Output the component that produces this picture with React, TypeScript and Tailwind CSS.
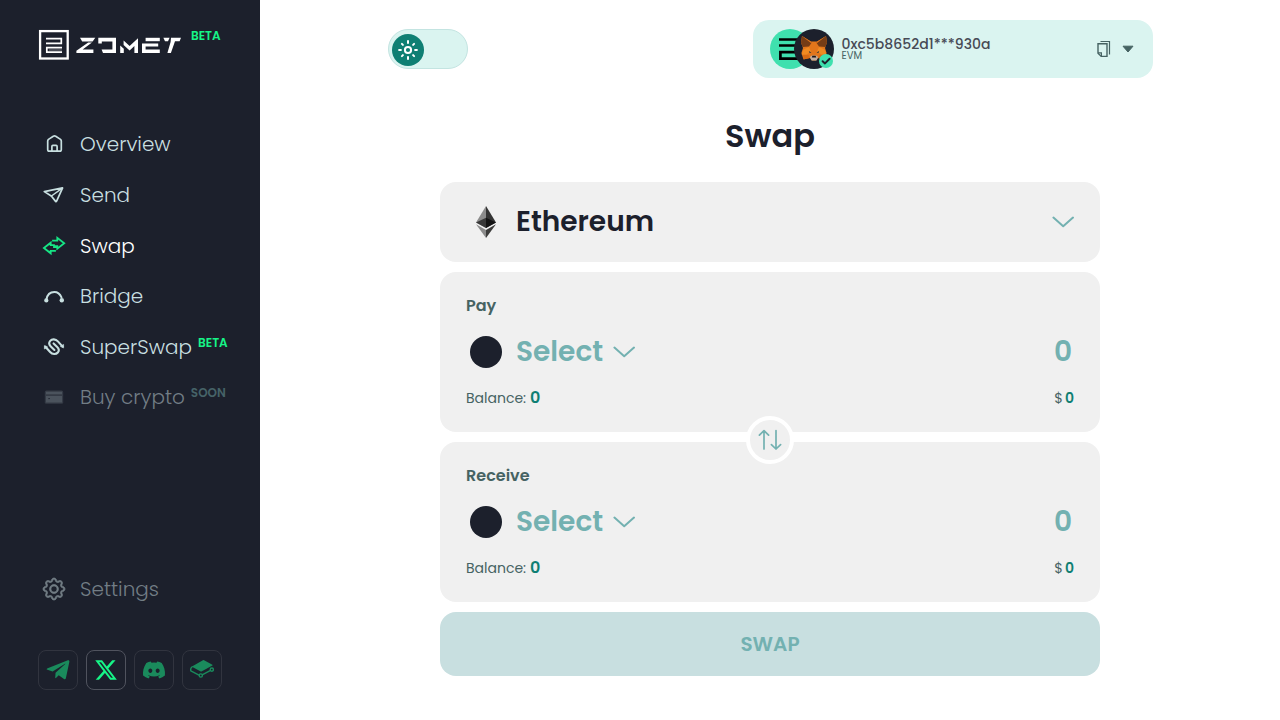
import type { ReactNode } from "react";
import { BsGear } from "react-icons/bs";
import { FaDiscord, FaTelegramPlane } from "react-icons/fa";
import { FaXTwitter } from "react-icons/fa6";

function Logo() {
  return (
    <svg width="144" height="32" viewBox="38 29 144 32" className="block" fill="none">
      <rect x="40.1" y="31.1" width="27.6" height="27.4" stroke="#fff" strokeWidth="2.3" />
      <path d="M46 38.7H61.3V43.3H46M62 47.6H46.8V52.2H62" stroke="#fff" strokeWidth="1.7" />
      <path d="M49 50H62" stroke="#fff" strokeWidth=".8" opacity=".5" />
      <g fill="#fff">
        <path d="M80 37.8H95.3L92.6 41.4H82.2Z" />
        <path d="M88.2 42.4H92L82.6 49.4H93.4V53H76.4V50.8Z" />
        <path d="M98.3 37.8H116V52.9H103L101.6 49.6H112.4V41.4H101.8V43.4H98.3Z" />
        <path d="M120.2 45.6L123.8 48.8V53H120.2Z" />
        <path d="M123.6 40.6L129.6 46L138 38.2V53H134.4V46L129.6 50.6L123.6 45Z" />
        <path d="M145.6 37.8H159.8V41.2H145.6Z" />
        <path d="M142 43.4H158.2V46.6H145.6V49.6H159.8V53H142Z" />
        <path d="M163.4 37.8H169.6L168 41.2H165Z" />
        <path d="M171 37.8H181L179.6 41.2H175L170.9 53H167.4L170.6 42Z" />
      </g>
    </svg>
  );
}

function Icon({ children, className = "" }: { children: ReactNode; className?: string }) {
  return (
    <svg width="24" height="24" viewBox="0 0 24 24" fill="none" stroke="currentColor" strokeWidth="1.5" strokeLinecap="round" strokeLinejoin="round" className={`shrink-0 ${className}`}>
      {children}
    </svg>
  );
}

const HomeIcon = () => (
  <Icon>
    <path d="M5.7 9.1Q5.7 8 6.5 7.4L11.3 4.2Q12.5 3.5 13.7 4.2L18.5 7.4Q19.3 8 19.3 9.1V17.5Q19.3 19.2 17.7 19.2H7.3Q5.7 19.2 5.7 17.5Z" strokeWidth="1.7" />
    <path d="M9.9 19V14.4Q9.9 13.3 10.9 13.3H14.1Q15.1 13.3 15.1 14.4V19" strokeWidth="1.7" />
  </Icon>
);
const SendIcon = () => (
  <Icon>
    <path d="M20.6 4.9L2.3 8.6L9.3 13L13.6 18.4Q14.2 19 14.6 18.2Z" strokeWidth="1.7" />
    <path d="M20.4 5.1L9.4 13" />
  </Icon>
);
const SwapIcon = () => (
  <Icon className="text-[#16e585]">
    <path d="M13 16.8H8.7V19.3L1.9 14L8.7 8.7V11.2H12V13.2H14.4" strokeWidth="1.8" strokeLinecap="square" strokeLinejoin="miter" />
    <path d="M11 6.6H15.3V3.9L22.2 9.2L15.3 14.6V12.1H13" strokeWidth="1.8" strokeLinecap="square" strokeLinejoin="miter" />
  </Icon>
);
const BridgeIcon = () => (
  <Icon>
    <path d="M4.4 15.6C5.4 9.6 9 8 12.4 8C16.2 8 18.2 10.5 19.5 13.4" strokeWidth="2" />
    <circle cx="4.3" cy="16.4" r="2.1" fill="currentColor" stroke="none" />
    <circle cx="19.8" cy="16.2" r="2.2" fill="currentColor" stroke="none" />
  </Icon>
);
const SuperSwapIcon = () => (
  <Icon>
    <path d="M20.6 11.6L15.9 6.4C13.6 3.8 10 3.8 8.2 5.9C6.6 7.8 7.3 10 8.8 11.5L12.4 15" strokeWidth="2.1" />
    <path d="M3.4 11.8L8.1 17C10.4 19.6 14 19.6 15.8 17.5C17.4 15.6 16.7 13.4 15.2 11.9L11.6 8.4" strokeWidth="2.1" />
    <path d="M2.4 10.8V14L5.4 12.2ZM21.6 12.6V9.4L18.6 11.2Z" fill="currentColor" strokeWidth="0.6" />
  </Icon>
);
const CardIcon = () => (
  <Icon>
    <rect x="2.8" y="5.6" width="18.4" height="13.2" rx="1.5" fill="#343a45" stroke="none" />
    <path d="M4 6.8H20V9.2H4ZM4 10.9H20V17.6H4Z" fill="#4b535d" stroke="none" />
    <path d="M6.8 13.6H7.4" stroke="#1c202c" strokeWidth="1" />
  </Icon>
);
const GitbookIcon = () => (
  <Icon>
    <path d="M14.1 2.2L22.4 6.7Q23 7.1 22.4 7.5L11.9 13.3Q11.1 13.7 10.3 13.3L2.4 8.9Q1.8 8.5 2.4 8.2L12.9 2.2Q13.5 1.9 14.1 2.2Z" fill="currentColor" stroke="none" />
    <path d="M2.2 8.7Q.2 10.1 .8 12.8L9 17.2M12.6 16.7L20.1 12.6" strokeWidth="1.4" />
    <circle cx="10.8" cy="17.5" r="1.6" strokeWidth="1.4" fill="#1c202c" />
    <circle cx="21.8" cy="11.6" r="1.6" strokeWidth="1.4" fill="#1c202c" />
  </Icon>
);

const nav = [
  { label: "Overview", icon: <HomeIcon />, color: "text-[#c8dfe0]" },
  { label: "Send", icon: <SendIcon />, color: "text-[#c8dfe0]" },
  { label: "Swap", icon: <SwapIcon />, color: "text-white" },
  { label: "Bridge", icon: <BridgeIcon />, color: "text-[#c8dfe0]" },
  { label: "SuperSwap", icon: <SuperSwapIcon />, color: "text-[#c8dfe0]", tag: "BETA", tagColor: "text-[#16f587]" },
  { label: "Buy crypto", icon: <CardIcon />, color: "text-[#727d85]", tag: "SOON", tagColor: "text-[#466368]" },
];

const social = [
  { key: "telegram", icon: <FaTelegramPlane size={26} />, style: "border-[#31343f] text-[#1a8a5c]" },
  { key: "x", icon: <FaXTwitter size={24} />, style: "border-[#50535e] text-[#16f587]" },
  { key: "discord", icon: <FaDiscord size={24} />, style: "border-[#31343f] text-[#1a8a5c]" },
  { key: "gitbook", icon: <GitbookIcon />, style: "border-[#31343f] text-[#1a8a5c]" },
];

function Sidebar() {
  return (
    <aside className="flex h-full w-[260px] shrink-0 flex-col bg-[#1c202c]">
      <div className="flex h-[119.1px] items-start pt-[29px] pl-[38px]">
        <Logo />
        <span className="-mt-[2px] ml-[9px] text-[12px] leading-[18px] font-semibold text-[#16f587]">BETA</span>
      </div>
      <nav className="flex flex-col">
        {nav.map((n) => (
          <div key={n.label} className={`flex h-[50.6px] items-center pl-[42px] text-[20px] leading-[30px] font-light ${n.color}`}>
            {n.icon}
            <span className="ml-[14px]">{n.label}</span>
            {n.tag && <span className={`mb-[8px] ml-[6px] text-[12px] leading-[18px] font-semibold ${n.tagColor}`}>{n.tag}</span>}
          </div>
        ))}
      </nav>
      <div className="mt-auto flex h-[30px] items-center pl-[43px] text-[20px] leading-[30px] font-light text-[#727d85]">
        <BsGear size={22} strokeWidth={0.5} className="overflow-visible" />
        <span className="ml-[15px]">Settings</span>
      </div>
      <div className="mt-[46px] mb-[30px] flex gap-2 pl-[38px]">
        {social.map((s) => (
          <div key={s.key} className={`flex size-10 items-center justify-center rounded-lg border ${s.style}`}>{s.icon}</div>
        ))}
      </div>
    </aside>
  );
}

function Avatars() {
  return (
    <svg width="66" height="42" viewBox="769 28 66 42" className="block">
      <circle cx="790" cy="49" r="20" fill="#3fe0ae" />
      <path d="M779 39.5H800M779 45.5H800M800 52.2H780.4V58.6H800" fill="none" stroke="#000" strokeWidth="2.7" />
      <circle cx="814" cy="49" r="20" fill="#1c202c" />
      <path d="M802 36L811 41.5H817L826 36L827 42.5L825 48L826.6 53L824.5 59.5L818 58L816 60.5H812L810 58L803.5 59.5L801.4 53L803 48L801 42.5Z" fill="#e2761b" />
      <path d="M802 36L811.6 42.8L809 46.5L802.6 47L801 42.5ZM826 36L816.4 42.8L819 46.5L825.4 47L827 42.5Z" fill="#763d16" />
      <path d="M802 36L811 41.8L811.6 43.6ZM826 36L817 41.8L816.4 43.6Z" fill="#e2761b" />
      <path d="M809 47L811 51.5L806.5 54.5H801.6L803.5 49.5ZM819 47L817 51.5L821.5 54.5H826.4L824.5 49.5Z" fill="#ef8a22" />
      <path d="M803 55H808.5L810 58L804 59.2ZM825 55H819.5L818 58L824 59.2Z" fill="#d66a14" />
      <path d="M808.8 51L811.4 52.4L809.6 53ZM819.2 51L816.6 52.4L818.4 53Z" fill="#26343c" />
      <path d="M809.8 57L812 55.6H816L818.2 57L816.5 60.4H811.5Z" fill="#c0ad9e" />
      <path d="M812.3 55.8H815.7L816.2 57.6H811.8Z" fill="#1a1619" />
      <circle cx="826" cy="61" r="7" fill="#3fe0ae" />
      <path d="M822.6 61.2L825 63.4L829.6 58.8" fill="none" stroke="#1c202c" strokeWidth="2" strokeLinecap="round" strokeLinejoin="round" />
    </svg>
  );
}

function Header() {
  return (
    <header className="flex h-[98px] items-center justify-between pr-[127px] pl-[128px]">
      <div className="flex h-10 w-20 items-center rounded-full border border-[#c3e4e1] bg-[#daf4f0] pl-[3px]">
        <div className="mt-[1px] flex size-8 items-center justify-center rounded-full bg-[#0f7f73]">
          <svg width="20" height="20" viewBox="0 0 20 20" fill="none" stroke="#fff" strokeWidth="2">
            <circle cx="10" cy="10" r="3.1" />
            <path strokeWidth="2" strokeLinecap="round" d="M10 1.1V2.9M10 17.1V18.9M1.1 10H2.9M17.1 10H18.9M3.9 3.9L4.9 4.9M15.1 15.1L16.1 16.1M3.9 16.1L4.9 15.1M15.1 4.9L16.1 3.9" />
          </svg>
        </div>
      </div>
      <div className="flex h-[58px] w-[400px] items-center rounded-2xl bg-[#daf4f0] pr-[19px] pl-4">
        <Avatars />
        <div className="ml-[6.5px] flex flex-col pb-[1px]">
          <span className="text-[14px] leading-[14px] font-medium text-[#474a55]">0xc5b8652d1***930a</span>
          <span className="text-[10px] leading-[10px] text-[#466363]">EVM</span>
        </div>
        <svg width="16" height="18" viewBox="0 0 16 18" fill="none" stroke="#466363" className="ml-auto">
          <path d="M4.5 1.5H13.5V14.5" strokeWidth="1.2" />
          <path d="M2 3.7H11V16.4H5.2L2 13.2Z" strokeWidth="1.4" />
          <path d="M2 12.8H5.4V16.4" strokeWidth="1.2" />
        </svg>
        <svg width="12" height="8" viewBox="0 0 12 8" className="ml-[10px]">
          <path d="M1 1.2H11L6 7Z" fill="#466363" stroke="#466363" strokeLinejoin="round" />
        </svg>
      </div>
    </header>
  );
}

const Chevron = () => (
  <svg width="22" height="12" viewBox="0 0 22 12" fill="none" stroke="#73b1b1" strokeWidth="2" strokeLinecap="round" strokeLinejoin="round">
    <path d="M1.4 1.6L11.2 10.2L21 1.6" />
  </svg>
);

function TokenCard({ title }: { title: string }) {
  return (
    <section className="flex h-40 flex-col rounded-2xl bg-[#f0f0f0] px-[26px] pt-[22px]">
      <h2 className="text-[16px] leading-6 font-semibold text-[#466363]">{title}</h2>
      <div className="mt-[13px] flex h-[42px] items-center text-[28px] leading-[42px] font-semibold text-[#73b1b1]">
        <span className="ml-1 size-8 rounded-full bg-[#1c202c]" />
        <span className="mr-[10px] ml-[14px]">Select</span>
        <Chevron />
        <span className="mr-[2px] ml-auto">0</span>
      </div>
      <div className="mt-[13px] flex h-6 items-center justify-between text-[14px] text-[#466363]">
        <span className="flex items-center gap-1 leading-6">Balance: <b className="text-[16px] font-semibold text-[#0f7f73]">0</b></span>
        <span className="flex items-center gap-[2px] leading-6">$ <b className="font-semibold text-[#0f7f73]">0</b></span>
      </div>
    </section>
  );
}

function Ethereum() {
  return (
    <svg width="20" height="32" viewBox="0 0 20 32">
      <path d="M10 0L0 16.4L10 22Z" fill="#8c8c8c" />
      <path d="M10 0V22L20 16.4Z" fill="#343434" />
      <path d="M10 11.8L0 16.4L10 22Z" fill="#393939" />
      <path d="M10 11.8V22L20 16.4Z" fill="#141414" />
      <path d="M0 18.2L10 32V24Z" fill="#8c8c8c" />
      <path d="M20 18.2L10 32V24Z" fill="#3c3c3b" />
    </svg>
  );
}

export default function App() {
  return (
    <div className="flex h-[720px] w-[1280px] overflow-hidden bg-white font-[Poppins,Inter,sans-serif]">
      <Sidebar />
      <main className="flex flex-1 flex-col">
        <Header />
        <div className="mx-auto flex w-[660px] flex-col">
          <h1 className="mt-[14px] mb-[22px] text-center text-[32px] leading-[48px] font-semibold text-[#1c202c]">Swap</h1>
          <div className="flex flex-col gap-[10px]">
            <div className="flex h-20 items-center rounded-2xl bg-[#f0f0f0] pr-[26px] pl-9 text-[28px] leading-[42px] font-semibold text-[#1c202c]">
              <Ethereum />
              <span className="mr-auto ml-5">Ethereum</span>
              <Chevron />
            </div>
            <TokenCard title="Pay" />
            <div className="relative">
              <TokenCard title="Receive" />
              <button className="absolute -top-[26px] left-1/2 flex size-12 -translate-x-1/2 items-center justify-center rounded-full border-4 border-white bg-[#f0f0f0]">
                <svg width="24" height="22" viewBox="0 0 24 22" fill="none" stroke="#73b1b1" strokeWidth="1.7" strokeLinecap="round" strokeLinejoin="round">
                  <path d="M6 20V1.6M1.4 6.2L6 1.6L10.6 6.2M18 1.6V20M13.4 15.6L18 20L22.6 15.6" />
                </svg>
              </button>
            </div>
            <button className="h-16 rounded-2xl bg-[#c8dfe0] text-[20px] leading-[30px] font-semibold text-[#73b1b1]">SWAP</button>
          </div>
        </div>
      </main>
    </div>
  );
}
